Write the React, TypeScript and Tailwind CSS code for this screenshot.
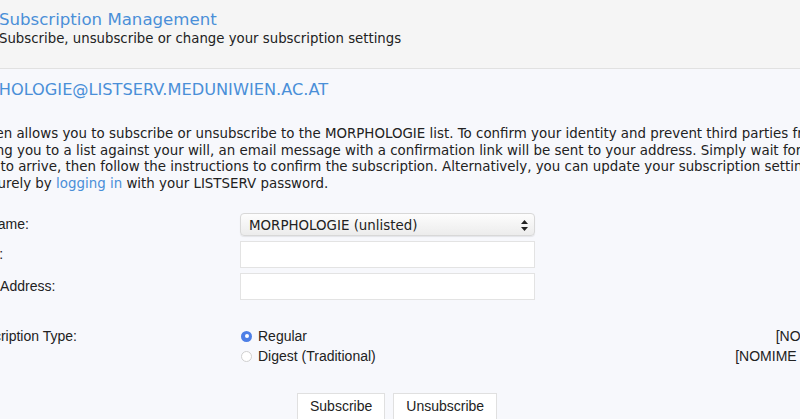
import { useState } from "react"

const wide = { fontFamily: '"DejaVu Sans", sans-serif' }

const App = () => {
  const [type, setType] = useState("regular")

  return (
    <div className="w-full h-[419px] overflow-hidden bg-[#f7f8fc] text-[#222]">
      <header
        className="h-[69px] bg-[#f5f5f5] border-b border-[#e1e1e1] -ml-[1px] pt-[9px]"
        style={wide}
      >
        <h1 className="text-[16.6px] leading-[21px] text-[#4a8fd8]">Subscription Management</h1>
        <p className="text-[13.3px] leading-[18px]">Subscribe, unsubscribe or change your subscription settings</p>
      </header>

      <main className="-ml-[64px] w-[1100px]">
        <h2 className="pt-[10px] text-[16.2px] leading-[21px] text-[#4a8fd8]" style={wide}>
          <span className="ml-[15px]">MORPHOLOGIE@LISTSERV.MEDUNIWIEN.AC.AT</span>
        </h2>

        <p className="mt-[26px] w-[1000px] text-[13.4px] leading-[16.7px]" style={wide}>
          This screen allows you to subscribe or unsubscribe to the MORPHOLOGIE list. To confirm your identity and prevent third parties from
          <br />
          subscribing you to a list against your will, an email message with a confirmation link will be sent to your address. Simply wait for the
          <br />
          message to arrive, then follow the instructions to confirm the subscription. Alternatively, you can update your subscription settings
          <br />
          more securely by <a className="text-[#4a8fd8]">logging in</a> with your LISTSERV password.
        </p>

        <form
          className="mt-[20px] pl-[26px] w-[988px] text-[14px]"
          style={{ fontFamily: '"Liberation Sans", Arial, sans-serif' }}
        >
          <div className="grid grid-cols-[278px_295px_1fr] gap-y-[5px] items-center">
            <label>List Name:</label>
            <div className="relative h-[23px] rounded-[4px] border border-[#d8d8d8] bg-gradient-to-b from-[#fdfdfd] to-[#ececec] shadow-[0_1px_1px_rgba(0,0,0,0.08)]">
              <span className="absolute left-[8px] top-[2px] text-[13.4px] text-[#222]" style={wide}>
                MORPHOLOGIE (unlisted)
              </span>
              <svg className="absolute right-[6px] top-[6px]" width="7" height="11" viewBox="0 0 7 11">
                <path d="M3.5 0 L7 4 H0 Z M3.5 11 L7 7 H0 Z" fill="#222" />
              </svg>
            </div>
            <div />

            <label>Name:</label>
            <input className="h-[27px] bg-white border border-[#e3e3e3] outline-none" />
            <div />

            <label>Email Address:</label>
            <input className="h-[27px] bg-white border border-[#e3e3e3] outline-none" />
            <div />
          </div>

          <div className="grid grid-cols-[278px_295px_1fr] mt-[27px] gap-y-[1px]">
            <label className="leading-[19px]">Subscription Type:</label>
            <label className="flex items-center gap-[6px] leading-[19px] pl-[1px]" onClick={() => setType("regular")}>
              <span
                className={
                  type === "regular"
                    ? "w-[11px] h-[11px] rounded-full bg-[#4d7fe6] flex items-center justify-center"
                    : "w-[11px] h-[11px] rounded-full bg-white border border-[#d0d0d0]"
                }
              >
                {type === "regular" && <span className="w-[4px] h-[4px] rounded-full bg-white" />}
              </span>
              Regular
            </label>
            <span className="text-right leading-[19px]">[NODIGEST NOINDEX]</span>

            <div />
            <label className="flex items-center gap-[6px] leading-[19px] pl-[1px]" onClick={() => setType("digest")}>
              <span
                className={
                  type === "digest"
                    ? "w-[11px] h-[11px] rounded-full bg-[#4d7fe6] flex items-center justify-center"
                    : "w-[11px] h-[11px] rounded-full bg-white border border-[#d0d0d0]"
                }
              >
                {type === "digest" && <span className="w-[4px] h-[4px] rounded-full bg-white" />}
              </span>
              Digest (Traditional)
            </label>
            <span className="text-right leading-[19px]">[NOMIME DIGEST NOINDEX]</span>
          </div>

          <div className="flex gap-[8px] mt-[27px] pl-[335px]">
            <button type="button" className="h-[28px] px-[12px] bg-white border border-[#e0e0e0]">
              Subscribe
            </button>
            <button type="button" className="h-[28px] px-[12px] bg-white border border-[#e0e0e0]">
              Unsubscribe
            </button>
          </div>
        </form>
      </main>
    </div>
  )
}

export default App
